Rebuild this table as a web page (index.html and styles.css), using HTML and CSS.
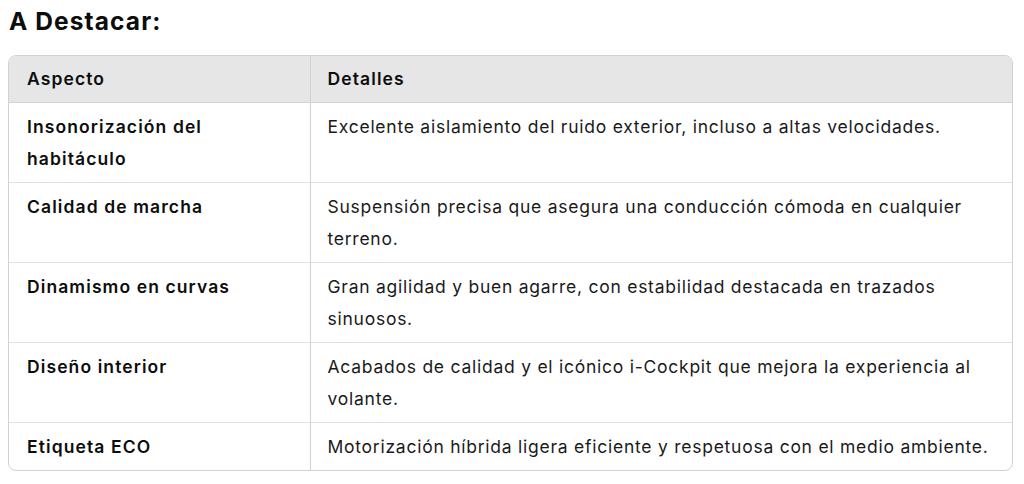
FILE: index.html
```html
<!DOCTYPE html>
<html lang="es">
<head>
<meta charset="utf-8">
<link rel="stylesheet" href="styles.css">
</head>
<body>
<h3 class="title">A Destacar:</h3>
<div class="table-wrap">
<table class="tbl">
<thead>
<tr><th class="c1">Aspecto</th><th class="c2">Detalles</th></tr>
</thead>
<tbody>
<tr><td class="c1"><strong>Insonorización del habitáculo</strong></td><td class="c2">Excelente aislamiento del ruido exterior, incluso a altas velocidades.</td></tr>
<tr><td class="c1"><strong>Calidad de marcha</strong></td><td class="c2">Suspensión precisa que asegura una conducción cómoda en cualquier terreno.</td></tr>
<tr><td class="c1"><strong>Dinamismo en curvas</strong></td><td class="c2">Gran agilidad y buen agarre, con estabilidad destacada en trazados sinuosos.</td></tr>
<tr><td class="c1"><strong>Diseño interior</strong></td><td class="c2">Acabados de calidad y el icónico i-Cockpit que mejora la experiencia al volante.</td></tr>
<tr><td class="c1"><strong>Etiqueta ECO</strong></td><td class="c2">Motorización híbrida ligera eficiente y respetuosa con el medio ambiente.</td></tr>
</tbody>
</table>
</div>
</body>
</html>
```
FILE: styles.css
```css
body {
  margin: 0;
  padding: 0 11px 0 8px;
  background: #ffffff;
  font-family: Inter, "Noto Sans", sans-serif;
  color: #0d0d0d;
}
.title {
  margin: 0;
  padding: 6px 0 0 1px;
  font-size: 24.5px;
  line-height: 30px;
  font-weight: 700;
  letter-spacing: 1.1px;
}
.table-wrap {
  margin-top: 19px;
  width: 1005px;
  border: 1px solid #d2d2d2;
  border-radius: 8px;
  overflow: hidden;
  box-sizing: border-box;
}
.tbl {
  width: 100%;
  border-collapse: collapse;
  table-layout: fixed;
  font-size: 17.5px;
  line-height: 32px;
  letter-spacing: 0.75px;
}
.tbl th, .tbl td {
  text-align: left;
  vertical-align: top;
  padding: 8px 17px 7px 17px;
}
.tbl .c1 { width: 301px; box-sizing: border-box; border-right: 1px solid #d2d2d2; padding-left: 18px; }
.tbl th {
  background: #e6e6e6;
  font-weight: 600;
  letter-spacing: 1.1px;
  padding-top: 7px;
  border-bottom: 1px solid #d2d2d2;
}
.tbl td { font-weight: 400; color: #1a1a1a; }
.tbl td strong { font-weight: 600; letter-spacing: 1.1px; color: #0d0d0d; }
.tbl tbody tr + tr td { border-top: 1px solid #e0e0e0; }
```
